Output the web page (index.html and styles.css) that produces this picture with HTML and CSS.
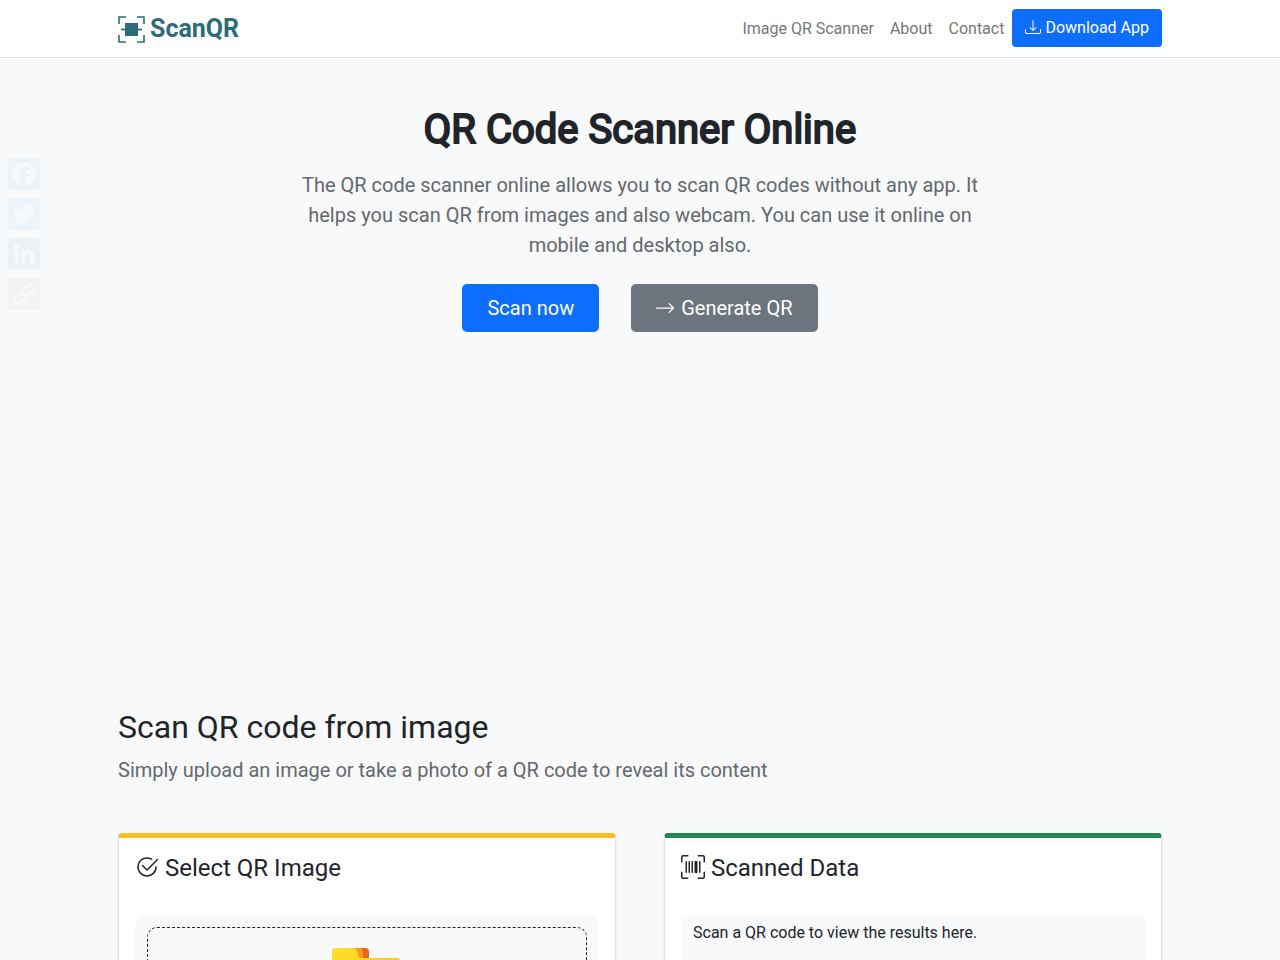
FILE: index.html
```html
<!DOCTYPE html>
<html lang="en">
<head>
    <meta charset="UTF-8">
    <meta name="viewport" content="width=device-width, initial-scale=1.0">
    <title>QR Code Scanner Online</title>
    <link rel="stylesheet" href="styles.css">
</head>
<body>

    <header class="topbar">
        <nav class="container navbar">
            <a class="brand" href="#">
                <svg width="27" height="27" viewBox="0 0 27 27" aria-hidden="true">
                    <path d="M1 8V1h7M19 1h7v7M26 19v7h-7M8 26H1v-7" fill="none" stroke="currentColor" stroke-width="1.6"/>
                    <path d="M3 13.500h21" stroke="currentColor" stroke-width="1.800"/>
                    <path d="M7 7h13v13H7z" fill="currentColor"/>
                </svg>
                <span>ScanQR</span>
            </a>
            <div class="nav-links">
                <a class="nav-link" href="#">Image QR Scanner</a>
                <a class="nav-link" href="#">About</a>
                <a class="nav-link" href="#">Contact</a>
                <a class="btn btn-primary" href="#">
                    <svg class="icon" viewBox="0 0 16 16" fill="currentColor" aria-hidden="true">
                        <path d="M.5 9.900a.5.5 0 0 1 .5.5v2.500a1 1 0 0 0 1 1h12a1 1 0 0 0 1-1v-2.500a.5.5 0 0 1 1 0v2.500a2 2 0 0 1-2 2H2a2 2 0 0 1-2-2v-2.500a.5.5 0 0 1 .5-.5z"/>
                        <path d="M7.646 11.854a.5.5 0 0 0 .708 0l3-3a.5.5 0 0 0-.708-.708L8.500 10.293V1.500a.5.5 0 0 0-1 0v8.793L5.354 8.146a.5.5 0 1 0-.708.708l3 3z"/>
                    </svg>
                    Download App</a>
            </div>
        </nav>
    </header>

    <div class="share">
        <a class="share-facebook" href="#" aria-label="Facebook">
            <svg viewBox="0 0 32 32"><path fill="#fff" d="M28 16c0-6.627-5.373-12-12-12S4 9.373 4 16c0 5.628 3.875 10.350 9.101 11.647v-7.980h-2.474V16H13.100v-1.580c0-4.085 1.849-5.978 5.859-5.978.76 0 2.072.15 2.608.298v3.325c-.283-.03-.775-.045-1.386-.045-1.967 0-2.728.745-2.728 2.683V16h3.920l-.673 3.667h-3.247v8.245C23.395 27.195 28 22.135 28 16"/></svg>
        </a>
        <a class="share-twitter" href="#" aria-label="Twitter">
            <svg viewBox="0 0 32 32"><path fill="#fff" d="M28 8.557a10 10 0 0 1-2.828.775 4.930 4.930 0 0 0 2.166-2.725 9.700 9.700 0 0 1-3.130 1.194 4.920 4.920 0 0 0-3.593-1.550 4.924 4.924 0 0 0-4.794 6.049c-4.090-.21-7.720-2.170-10.150-5.150a4.940 4.940 0 0 0-.665 2.477c0 1.710.870 3.214 2.190 4.100a5 5 0 0 1-2.230-.616v.060c0 2.390 1.700 4.380 3.952 4.830-.414.115-.850.174-1.297.174q-.476-.001-.928-.088a4.935 4.935 0 0 0 4.600 3.420 9.900 9.900 0 0 1-6.114 2.107q-.597 0-1.175-.068a13.950 13.950 0 0 0 7.548 2.212c9.057 0 14.009-7.503 14.009-14.009 0-.213-.005-.426-.015-.637.960-.695 1.795-1.560 2.455-2.550z"/></svg>
        </a>
        <a class="share-linkedin" href="#" aria-label="LinkedIn">
            <svg viewBox="0 0 32 32"><path fill="#fff" d="M6.227 12.610h4.190v13.480h-4.190zm2.095-6.700a2.430 2.430 0 0 1 0 4.860c-1.344 0-2.428-1.090-2.428-2.430s1.084-2.430 2.428-2.430m4.720 6.700h4.020v1.840h.058c.560-1.058 1.927-2.176 3.965-2.176 4.238 0 5.020 2.792 5.020 6.420v7.395h-4.183v-6.560c0-1.564-.030-3.574-2.178-3.574-2.180 0-2.514 1.700-2.514 3.460v6.668h-4.187z"/></svg>
        </a>
        <a class="share-link" href="#" aria-label="Copy link">
            <svg viewBox="0 0 32 32" fill="none" stroke="#fff" stroke-width="2.500" stroke-linejoin="round">
                <path d="M15.500 11l4-4a2.500 2.500 0 0 1 3.500 0l2 2a2.500 2.500 0 0 1 0 3.500l-4 4a2.500 2.500 0 0 1-3.500 0l-2-2a2.500 2.500 0 0 1 0-3.500z"/>
                <path d="M7 19.500l4-4a2.500 2.500 0 0 1 3.500 0l2 2a2.500 2.500 0 0 1 0 3.500l-4 4A2.500 2.500 0 0 1 9 25l-2-2a2.500 2.500 0 0 1 0-3.500z"/>
            </svg>
        </a>
    </div>

    <main>
        <section class="container hero">
            <h1>QR Code Scanner Online</h1>
            <p class="lead">The QR code scanner online allows you to scan QR codes without any app. It helps you scan QR from images and also webcam. You can use it online on mobile and desktop also.</p>
            <div class="hero-buttons">
                <button type="button" class="btn btn-lg btn-primary">Scan now</button>
                <button type="button" class="btn btn-lg btn-secondary">
                    <svg class="icon" viewBox="0 0 16 16" fill="currentColor" aria-hidden="true">
                        <path d="M10.146 4.146a.5.5 0 0 1 .708 0l3.500 3.500a.5.5 0 0 1 0 .708l-3.500 3.500a.5.5 0 0 1-.708-.708L12.793 8.500H.5a.5.5 0 0 1 0-1h12.293l-2.647-2.646a.5.5 0 0 1 0-.708z"/>
                    </svg>
                    Generate QR</button>
            </div>
        </section>

        <section class="container scan">
            <h2>Scan QR code from image</h2>
            <p class="lead">Simply upload an image or take a photo of a QR code to reveal its content</p>

            <div class="cards">
                <div class="card card-warning">
                    <h3>
                        <svg class="icon" viewBox="0 0 16 16" fill="currentColor" aria-hidden="true">
                            <path d="M2.500 8a5.500 5.500 0 0 1 8.250-4.764.5.5 0 0 0 .5-.866A6.500 6.500 0 1 0 14.500 8a.5.5 0 0 0-1 0 5.500 5.500 0 1 1-11 0z"/>
                            <path d="M15.354 3.354a.5.5 0 0 0-.708-.708L8 9.293 5.354 6.646a.5.5 0 1 0-.708.708l3 3a.5.5 0 0 0 .708 0l7-7z"/>
                        </svg>
                        Select QR Image</h3>
                    <div class="upload">
                        <div class="dropzone">
                            <svg width="70" height="56" viewBox="0 0 70 56" aria-hidden="true">
                                <defs>
                                    <linearGradient id="tab" x1="0" y1="0" x2="1" y2="1">
                                        <stop offset="0" stop-color="#ffe02e"/>
                                        <stop offset="1" stop-color="#fbbd12"/>
                                    </linearGradient>
                                </defs>
                                <path d="M22 0h11q4 0 4 4v10H22z" fill="#e9651c"/>
                                <path d="M18 0h9q4 0 4 5v9H18z" fill="#f79a18"/>
                                <path d="M4 0h18q3 1 4 6l1 4h37q5 0 5 5v41H0V4q0-4 4-4z" fill="url(#tab)"/>
                            </svg>
                        </div>
                    </div>
                </div>
                <div class="card card-success">
                    <h3>
                        <svg class="icon" viewBox="0 0 16 16" fill="currentColor" aria-hidden="true">
                            <path d="M1.500 1a.5.5 0 0 0-.5.5v3a.5.5 0 0 1-1 0v-3A1.500 1.500 0 0 1 1.500 0h3a.5.5 0 0 1 0 1h-3zM11 .5a.5.5 0 0 1 .5-.5h3A1.500 1.500 0 0 1 16 1.500v3a.5.5 0 0 1-1 0v-3a.5.5 0 0 0-.5-.5h-3a.5.5 0 0 1-.5-.5zM.5 11a.5.5 0 0 1 .5.5v3a.5.5 0 0 0 .5.5h3a.5.5 0 0 1 0 1h-3A1.500 1.500 0 0 1 0 14.500v-3a.5.5 0 0 1 .5-.5zm15 0a.5.5 0 0 1 .5.5v3a1.500 1.500 0 0 1-1.500 1.500h-3a.5.5 0 0 1 0-1h3a.5.5 0 0 0 .5-.5v-3a.5.5 0 0 1 .5-.5zM3 4.500a.5.5 0 0 1 1 0v7a.5.5 0 0 1-1 0v-7zm2 0a.5.5 0 0 1 1 0v7a.5.5 0 0 1-1 0v-7zm2 0a.5.5 0 0 1 1 0v7a.5.5 0 0 1-1 0v-7zm2 0a.5.5 0 0 1 .5-.5h1a.5.5 0 0 1 .5.5v7a.5.5 0 0 1-.5.5h-1a.5.5 0 0 1-.5-.5v-7zm3 0a.5.5 0 0 1 1 0v7a.5.5 0 0 1-1 0v-7z"/>
                        </svg>
                        Scanned Data</h3>
                    <div class="result">Scan a QR code to view the results here.</div>
                </div>
            </div>
        </section>
    </main>

</body>
</html>
```

FILE: styles.css
```css
* {
    box-sizing: border-box;
}

body {
    margin: 0;
    font-family: Roboto, sans-serif;
    font-size: 16px;
    line-height: 24px;
    color: #212529;
    background-color: #f8f9fa;
}

h1, h2, h3, p {
    margin: 0;
    font-weight: 400;
}

a {
    text-decoration: none;
}

.container {
    max-width: 1140px;
    margin: 0 auto;
    padding: 0 48px;
}

.topbar {
    background-color: #fff;
    border-bottom: 1px solid #dee2e6;
}

.navbar {
    display: flex;
    justify-content: space-between;
    align-items: center;
    padding-top: 9px;
    padding-bottom: 8px;
}

.brand {
    display: flex;
    align-items: center;
    gap: 5px;
    font-size: 25px;
    font-weight: 700;
    color: #2e6b78;
}

.nav-links {
    display: flex;
    align-items: center;
}

.nav-link {
    padding: 8px;
    color: #777;
}

.icon {
    width: 1em;
    height: 1em;
    vertical-align: -0.125em;
}

.btn {
    padding: 6px 12px;
    border: 1px solid transparent;
    border-radius: 4px;
    font-family: inherit;
    font-size: 16px;
    line-height: 24px;
    color: #fff;
    cursor: pointer;
}

.btn-lg {
    padding: 8px 24px;
    font-size: 20px;
    line-height: 30px;
    border-radius: 5px;
}

.btn-primary {
    background-color: #0d6efd;
}

.btn-secondary {
    background-color: #6c757d;
}

.nav-links .btn {
    align-self: flex-start;
}

.share {
    position: fixed;
    top: 158px;
    left: 8px;
    display: flex;
    flex-direction: column;
    gap: 8px;
    opacity: 0.05;
}

.share a {
    display: block;
    width: 32px;
    height: 32px;
    border-radius: 4px;
}

.share svg {
    display: block;
}

.share-facebook {
    background-color: #1877f2;
}

.share-twitter {
    background-color: #1d9bf0;
}

.share-linkedin {
    background-color: #007bb5;
}

.share-link {
    background-color: #888990;
}

.lead {
    font-size: 20px;
    line-height: 30px;
    color: #64686d;
}

.hero {
    padding-top: 48px;
    text-align: center;
}

.hero h1 {
    margin-bottom: 16px;
    font-size: 40px;
    line-height: 48px;
    -webkit-text-stroke: 2px #212529;
}

.hero .lead {
    max-width: 696px;
    margin: 0 auto 24px;
}

.hero-buttons {
    display: flex;
    flex-wrap: wrap;
    justify-content: center;
    gap: 32px;
}

.scan {
    padding-top: 375px;
}

.scan h2 {
    margin-bottom: 8px;
    font-size: 32px;
    line-height: 40px;
}

.cards {
    display: grid;
    grid-template-columns: 1fr 1fr;
    gap: 48px;
    margin-top: 48px;
}

.card {
    padding: 16px;
    background-color: #fff;
    border: 1px solid #dee2e6;
    border-radius: 4px;
    box-shadow: 0 2px 4px rgba(0, 0, 0, 0.075);
}

.card-warning {
    border-top: 5px solid #f5c026;
}

.card-success {
    border-top: 5px solid #238551;
}

.card h3 {
    margin-bottom: 32px;
    font-size: 24px;
    line-height: 29px;
}

.upload {
    padding: 12px;
    background-color: #f9f9f9;
    border-radius: 10px;
}

.dropzone {
    padding: 20px;
    border: 1px dashed #212529;
    border-radius: 10px;
    text-align: center;
}

.result {
    min-height: 200px;
    padding: 6px 12px;
    background-color: #f8f9fa;
    border-radius: 4px;
}
```
